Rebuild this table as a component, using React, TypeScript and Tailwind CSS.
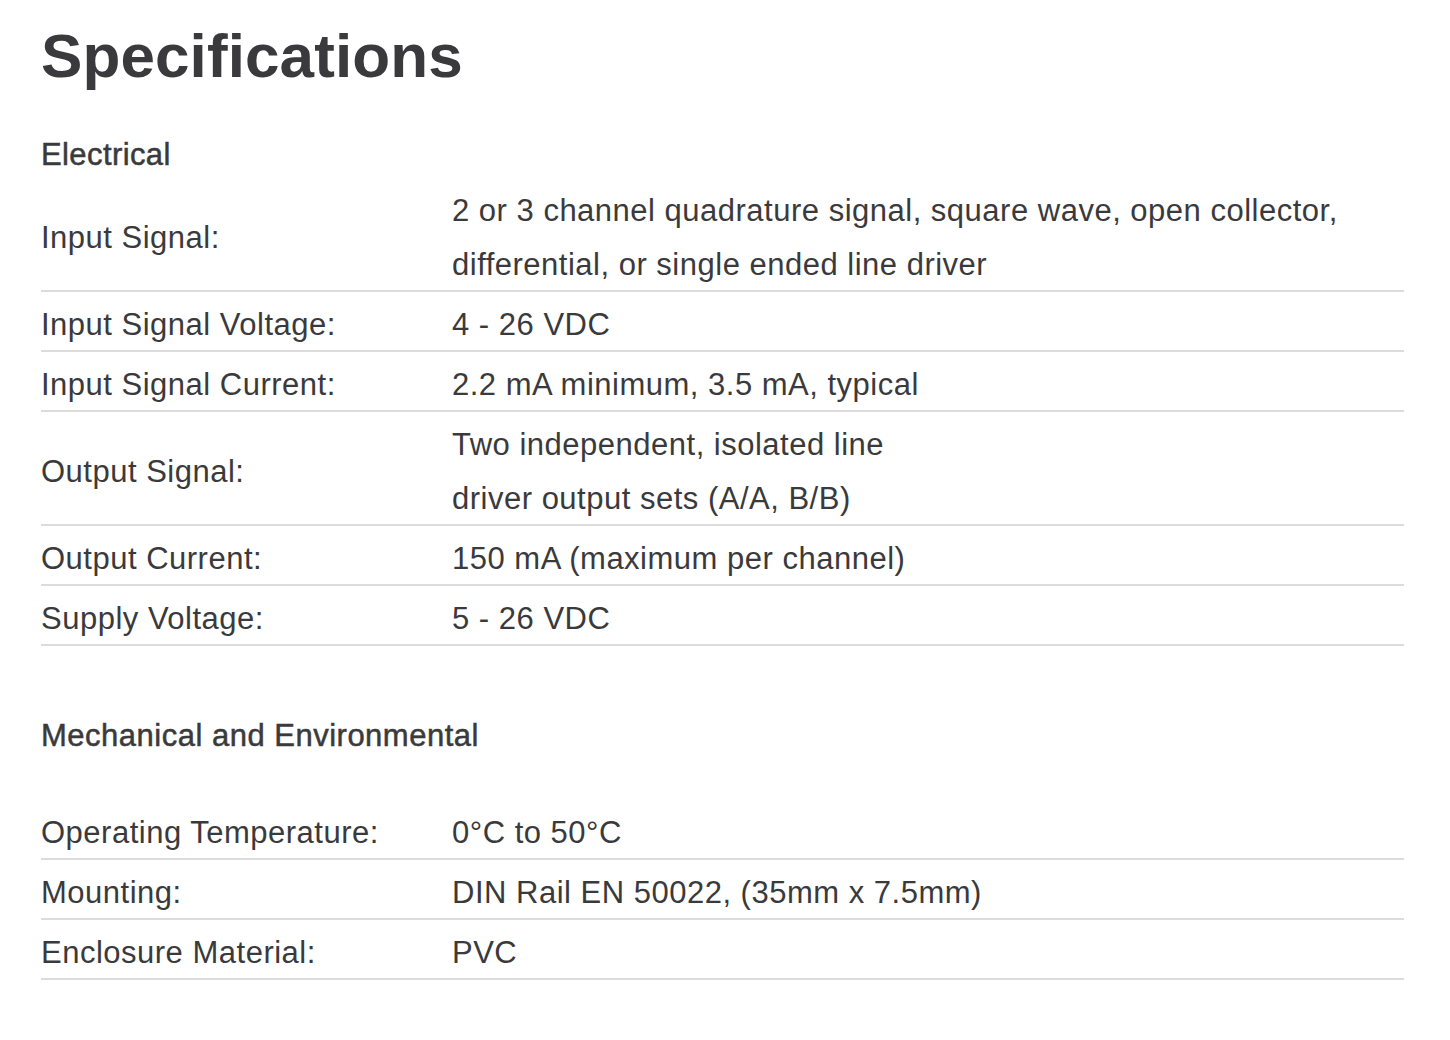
import React from "react";

type Row = { label: string; value: string[] };

const electrical: Row[] = [
  {
    label: "Input Signal:",
    value: [
      "2 or 3 channel quadrature signal, square wave, open collector,",
      "differential, or single ended line driver",
    ],
  },
  { label: "Input Signal Voltage:", value: ["4 - 26 VDC"] },
  { label: "Input Signal Current:", value: ["2.2 mA minimum, 3.5 mA, typical"] },
  {
    label: "Output Signal:",
    value: ["Two independent, isolated line", "driver output sets (A/A, B/B)"],
  },
  { label: "Output Current:", value: ["150 mA (maximum per channel)"] },
  { label: "Supply Voltage:", value: ["5 - 26 VDC"] },
];

const mechanical: Row[] = [
  { label: "Operating Temperature:", value: ["0°C to 50°C"] },
  { label: "Mounting:", value: ["DIN Rail EN 50022, (35mm x 7.5mm)"] },
  { label: "Enclosure Material:", value: ["PVC"] },
];

function SpecTable({ rows }: { rows: Row[] }) {
  return (
    <div className="flex flex-col">
      {rows.map((r) => (
        <div key={r.label} className="flex border-b-2 border-[#dcdcdc] pt-[6px]">
          <div className="w-[411px] shrink-0 flex items-center leading-[54px] -mb-[2px]">{r.label}</div>
          <div className="flex flex-col leading-[54px] -mb-[2px]">
            {r.value.map((v) => (
              <div key={v} className="whitespace-nowrap">
                {v}
              </div>
            ))}
          </div>
        </div>
      ))}
    </div>
  );
}

export default function App() {
  return (
    <div className="min-h-[1040px] w-[1450px] bg-white text-[#3a3a3c] font-['Liberation_Sans',Arial,sans-serif]">
      <div className="ml-[41px] w-[1363px] pt-[20px] text-[31px] tracking-[0.5px]">
        <h1 className="text-[62px] leading-[72px] font-bold tracking-[0.1px]">Specifications</h1>
        <h2 className="mt-[43px] text-[31px] leading-[40px] tracking-[0.4px] [-webkit-text-stroke:0.5px_#3a3a3c]">
          Electrical
        </h2>
        <div className="mt-[3px]">
          <SpecTable rows={electrical} />
        </div>
        <h2 className="mt-[70px] text-[31px] leading-[40px] tracking-[0.5px] [-webkit-text-stroke:0.5px_#3a3a3c]">
          Mechanical and Environmental
        </h2>
        <div className="mt-[44px]">
          <SpecTable rows={mechanical} />
        </div>
      </div>
    </div>
  );
}
